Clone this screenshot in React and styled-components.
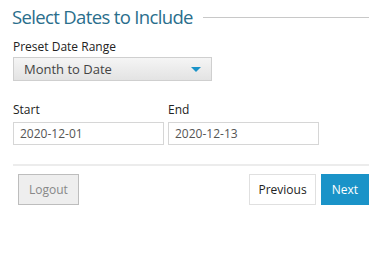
import React from 'react';
import styled, { createGlobalStyle } from 'styled-components';

const GlobalStyle = createGlobalStyle`
  body {
    margin: 0;
    background: #fff;
    font-family: "Open Sans", "Noto Sans", sans-serif;
    color: #222;
  }
`;

const Wrapper = styled.div`
  width: 357px;
  padding: 4px 20px 0 12px;
`;

const Heading = styled.div`
  display: flex;
  align-items: center;
  gap: 10px;
  font-size: 18.5px;
  letter-spacing: -0.65px;
  color: #2a6e8c;
  line-height: 26px;

  &::after {
    content: '';
    flex: 1;
    height: 1px;
    background: #c8c8c8;
  }
`;

const Field = styled.div`
  margin: ${props => props.top || 0}px 0 0 1px;
`;

const Label = styled.div`
  font-size: 12px;
  line-height: 16px;
  color: #222;
  margin-bottom: ${props => props.gap || 5}px;
`;

const Select = styled.div`
  width: 199px;
  height: 24px;
  box-sizing: border-box;
  border: 1px solid #cfcfcf;
  background: linear-gradient(#f5f5f5, #e3e3e3);
  display: flex;
  align-items: center;
  justify-content: space-between;
  padding: 0 10px;
  font-size: 13px;
  color: #444;
`;

const Arrow = styled.span`
  width: 0;
  height: 0;
  border-left: 5px solid transparent;
  border-right: 5px solid transparent;
  border-top: 5px solid #1a93c8;
`;

const DateRow = styled.div`
  display: flex;
  gap: 3px;
  margin-top: 21px;
`;

const Input = styled.div`
  width: 151px;
  height: 23px;
  box-sizing: border-box;
  border: 1px solid #d6d6d6;
  padding: 0 6px;
  font-size: 12px;
  line-height: 21px;
  color: #555;
`;

const Rule = styled.div`
  height: 2px;
  background: #ececec;
  margin: 19px 0 8px 1px;
`;

const Actions = styled.div`
  display: flex;
  align-items: center;
  padding-left: 6px;
`;

const Spacer = styled.div`
  flex: 1;
`;

const Button = styled.button`
  font-family: inherit;
  font-size: 12px;
  height: 31px;
  padding: 0 ${props => props.pad || 10}px;
  margin-left: ${props => props.ml || 0}px;
  border: 1px solid ${props => props.border};
  background: ${props => props.bg};
  color: ${props => props.fg};
  cursor: pointer;
`;

export default function App() {
  return (
    <Wrapper>
      <GlobalStyle />
      <Heading>Select Dates to Include</Heading>
      <Field top={9}>
        <Label gap={2}>Preset Date Range</Label>
        <Select>
          <span>Month to Date</span>
          <Arrow />
        </Select>
      </Field>
      <DateRow>
        <Field>
          <Label gap={4}>Start</Label>
          <Input>2020-12-01</Input>
        </Field>
        <Field>
          <Label gap={4}>End</Label>
          <Input>2020-12-13</Input>
        </Field>
      </DateRow>
      <Rule />
      <Actions>
        <Button bg="#eeeeee" border="#bdbdbd" fg="#888">Logout</Button>
        <Spacer />
        <Button bg="#fff" border="#e0e0e0" fg="#222" pad={8}>Previous</Button>
        <Button bg="#1a93c8" border="#1a93c8" fg="#fff" ml={5}>Next</Button>
      </Actions>
    </Wrapper>
  );
}
